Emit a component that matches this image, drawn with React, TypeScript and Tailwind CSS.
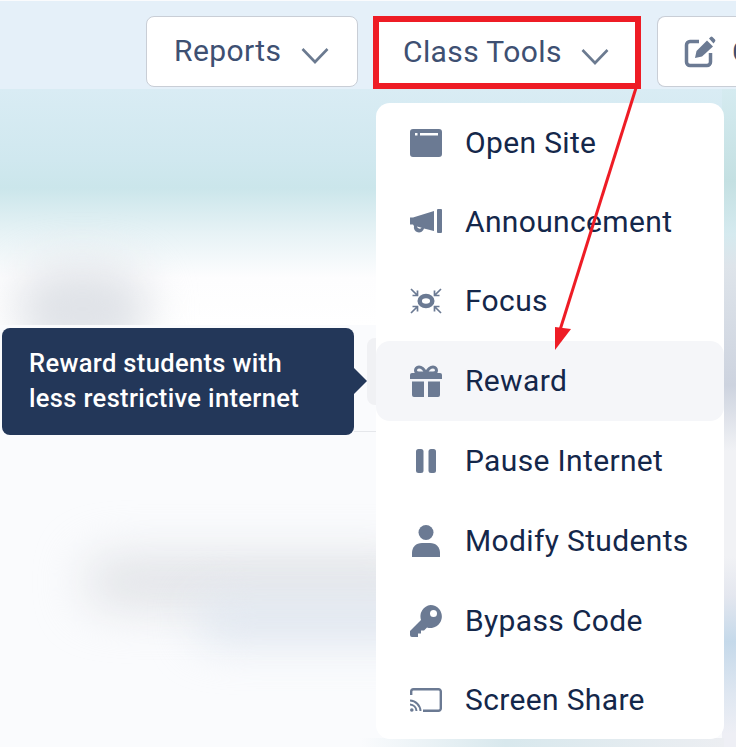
import React from "react";

const font = "font-['Roboto','Liberation_Sans',sans-serif]";

function Chevron({ className = "" }: { className?: string }) {
  return (
    <svg width="28" height="17" viewBox="0 0 28 17" fill="none" className={className}>
      <path d="M1.500 2 L14 15 L26.500 2" stroke="#6b7a90" strokeWidth="2.600" />
    </svg>
  );
}

const iconFill = "#6b7a93";

const icons: Record<string, React.ReactNode> = {
  site: (
    <svg width="32" height="28" viewBox="0 0 32 28">
      <path fillRule="evenodd" fill={iconFill} d="M3 0h26a3 3 0 0 1 3 3v22a3 3 0 0 1-3 3H3a3 3 0 0 1-3-3V3a3 3 0 0 1 3-3Zm2 4v2.500h2.500V4Zm5 0v2.500h18V4Z" />
    </svg>
  ),
  announce: (
    <svg width="32" height="26" viewBox="0 0 32 26">
      <path fill={iconFill} d="M0 8.500h3l21-6.500v20L14 19.500a5 5 0 0 1-10-2.500L3 15.500H0Zm7 9a2.600 2.600 0 0 0 4.600 1.200Z" />
      <rect x="27" y="0" width="5" height="24" rx="1" fill={iconFill} />
    </svg>
  ),
  focus: (
    <svg width="32" height="26" viewBox="0 0 32 26">
      <ellipse cx="16" cy="13" rx="6.300" ry="5" fill="none" stroke={iconFill} strokeWidth="4.500" />
      <g stroke={iconFill} strokeWidth="1.700" fill="none">
        <path d="M1 1l6.500 6.500M2.500 7.500H7.500V2.500" />
        <path d="M31 1l-6.500 6.500M29.500 7.500H24.500V2.500" />
        <path d="M1 25l6.500-6.500M2.500 18.500H7.500V23.500" />
        <path d="M31 25l-6.500-6.500M29.500 18.500H24.500V23.500" />
      </g>
    </svg>
  ),
  gift: (
    <svg width="32" height="32" viewBox="0 0 32 32">
      <path fill="none" stroke={iconFill} strokeWidth="3" d="M16 8c-2-4-4-6-7-6-2.500 0-3.500 2-3.500 3.500S7 8 9 8Zm0 0c2-4 4-6 7-6 2.500 0 3.500 2 3.500 3.500S25 8 23 8Z" />
      <path fill={iconFill} d="M2 8h28a2 2 0 0 1 2 2v4H0v-4a2 2 0 0 1 2-2Z" />
      <path fill={iconFill} d="M2 16.500h12V32H4a2 2 0 0 1-2-2ZM18 16.500h12V30a2 2 0 0 1-2 2H18Z" />
    </svg>
  ),
  pause: (
    <svg width="20" height="24" viewBox="0 0 20 24">
      <rect x="0" y="0" width="7.500" height="24" rx="2.500" fill={iconFill} />
      <rect x="12.500" y="0" width="7.500" height="24" rx="2.500" fill={iconFill} />
    </svg>
  ),
  user: (
    <svg width="28" height="32" viewBox="0 0 28 32">
      <circle cx="14" cy="7.500" r="7.500" fill={iconFill} />
      <path fill={iconFill} d="M0 32v-4c0-6 4-10 10-10h8c6 0 10 4 10 10v4Z" />
    </svg>
  ),
  key: (
    <svg width="32" height="32" viewBox="0 0 32 32">
      <path fillRule="evenodd" fill={iconFill} d="M20.500 0A11.500 11.500 0 1 1 17 22.500l-3 3h-3v3H8V32H2a2 2 0 0 1-2-2v-4l11-11A11.500 11.500 0 0 1 20.500 0Zm3 5a3.500 3.500 0 1 0 0 7 3.500 3.500 0 0 0 0-7Z" />
    </svg>
  ),
  cast: (
    <svg width="32" height="24" viewBox="0 0 32 24" fill="none" stroke={iconFill}>
      <path strokeWidth="2.400" d="M1.200 7V3.500A2.300 2.300 0 0 1 3.500 1.200h25a2.300 2.300 0 0 1 2.300 2.300v17a2.300 2.300 0 0 1-2.300 2.300H13" />
      <path strokeWidth="2" d="M0 12.500A11 11 0 0 1 10.500 23M0 16.500A7 7 0 0 1 6.500 23" />
      <circle cx="1.800" cy="22" r="1.800" fill={iconFill} stroke="none" />
    </svg>
  ),
};

const items: [string, string, string][] = [
  ["site", "Open Site", ""],
  ["announce", "Announcement", ""],
  ["focus", "Focus", ""],
  ["gift", "Reward", "bg-[#f5f6f9] !h-[80px] mb-px"],
  ["pause", "Pause Internet", ""],
  ["user", "Modify Students", ""],
  ["key", "Bypass Code", "pt-[1px]"],
  ["cast", "Screen Share", "pt-[1px]"],
];

const btnText = "text-[#3e5072] text-[30px] tracking-[0.4px]";

export default function App() {
  return (
    <div className={`relative w-[736px] h-[747px] overflow-hidden flex flex-col pt-px bg-[#fafbfd] ${font}`}>
      {/* top bar */}
      <header className="h-[88px] shrink-0 bg-[#e5f0f9] flex items-start pt-[15px] pl-[146px]">
        <button className={`w-[212px] h-[71px] rounded-lg bg-white border border-[#c9ced6] flex items-center pl-[27px] pb-[2px] gap-[20px] shrink-0 ${btnText}`}>
          Reports <Chevron className="mt-[9px]" />
        </button>
        <button className={`ml-[15px] w-[268px] h-[73px] bg-white border-[6px] border-[#ee1c25] flex items-center pl-[24px] pb-[2px] gap-[19px] shrink-0 ${btnText}`}>
          Class Tools <Chevron className="mt-[9px]" />
        </button>
        <button className={`ml-[16px] w-[140px] h-[71px] rounded-l-lg bg-white border border-[#c9ced6] border-r-0 flex items-center pl-[26px] gap-[16px] shrink-0 overflow-hidden ${btnText}`}>
          <svg width="32" height="32" viewBox="0 0 32 32" fill="none" className="shrink-0">
            <path d="M15 5.500H6a3.500 3.500 0 0 0-3.500 3.500v17A3.500 3.500 0 0 0 6 29.500h17a3.500 3.500 0 0 0 3.500-3.500v-9" stroke="#6b7a93" strokeWidth="3.500" />
            <path d="M11 22l1.500-7L23 4.500l6 6L18 20.500Z" fill="#6b7a93" />
            <path d="M25 2.500l1.500-1.500a1.500 1.500 0 0 1 2 0l2.500 2.500a1.500 1.500 0 0 1 0 2L29.500 7.500Z" fill="#6b7a93" />
          </svg>
          C
        </button>
      </header>

      {/* blurred page behind the menu */}
      <section className="relative h-[236px] shrink-0 overflow-hidden bg-[linear-gradient(180deg,#d9ecf4_0%,#d0e8ef_30%,#cbe6eb_42%,#e8f3f6_62%,#fdfdfe_80%,#ffffff_100%)]">
        <div className="absolute left-[15px] top-[175px] w-[135px] h-[90px] rounded-full bg-[#e0e3e8] blur-[22px]" />
      </section>
      <section className="relative flex-1 overflow-hidden">
        <div className="absolute left-[85px] top-[232px] w-[345px] h-[50px] rounded-full bg-[#e0e2e6] blur-[24px]" />
        <div className="absolute left-[195px] top-[272px] w-[310px] h-[46px] rounded-full bg-[#e0e7f0] blur-[22px]" />
        <div className="absolute left-[367px] top-[13px] w-[12px] h-[67px] rounded-l-lg bg-[#f0f1f4]" />
        <div className="absolute left-[354px] top-[106px] w-[24px] h-px bg-[#e5e7eb]" />
      </section>

      {/* strip to the right of the menu */}
      <div className="absolute right-0 top-[89px] bottom-0 w-[14px] bg-[linear-gradient(180deg,#d5ebf0_0%,#c4e0e2_14%,#d5eaef_22%,#dee4ea_27%,#cdd3df_45%,#f1f2f5_55%,#f1f2f5_71%,#e4e7ef_77%,#c5d9ea_84%,#dfe7f1_92%,#eeeff5_98%)]" />
      <div className="absolute left-[360px] right-[12px] bottom-0 h-[9px] bg-[linear-gradient(90deg,#fafbfd,#d8e8ed_40%,#eceef2)]" />

      {/* dropdown menu */}
      <div className="absolute left-[376px] top-[103px] w-[348px] h-[636px] rounded-[14px] bg-white flex flex-col">
        {items.map(([icon, label, extra]) => (
          <div key={label} className={`h-[79.500px] flex items-center rounded-[14px] ${extra}`}>
            <span className="w-[90px] pl-[10px] flex items-center justify-center shrink-0 -mr-px">{icons[icon]}</span>
            <span className="text-[#14274a] text-[30px] tracking-[0.35px] leading-none">{label}</span>
          </div>
        ))}
      </div>

      {/* tooltip */}
      <div className="absolute left-[2px] top-[328px] w-[352px] h-[107px] rounded-lg bg-[#233759] pl-[27px] pt-[18px] text-white text-[25.500px] tracking-[0.35px] font-medium leading-[35px]">
        <div>Reward students with</div>
        <div>less restrictive internet</div>
        <div className="absolute right-[-13px] top-[40px] w-0 h-0 border-y-[13px] border-y-transparent border-l-[13px] border-l-[#233759]" />
      </div>

      {/* annotation arrow */}
      <svg className="absolute left-0 top-0 pointer-events-none" width="736" height="747" viewBox="0 0 736 747">
        <path d="M636 88 L560 330" stroke="#ee1c25" strokeWidth="3" />
        <path d="M555 350 L555 327 L571 329 Z" fill="#ee1c25" />
      </svg>
    </div>
  );
}
